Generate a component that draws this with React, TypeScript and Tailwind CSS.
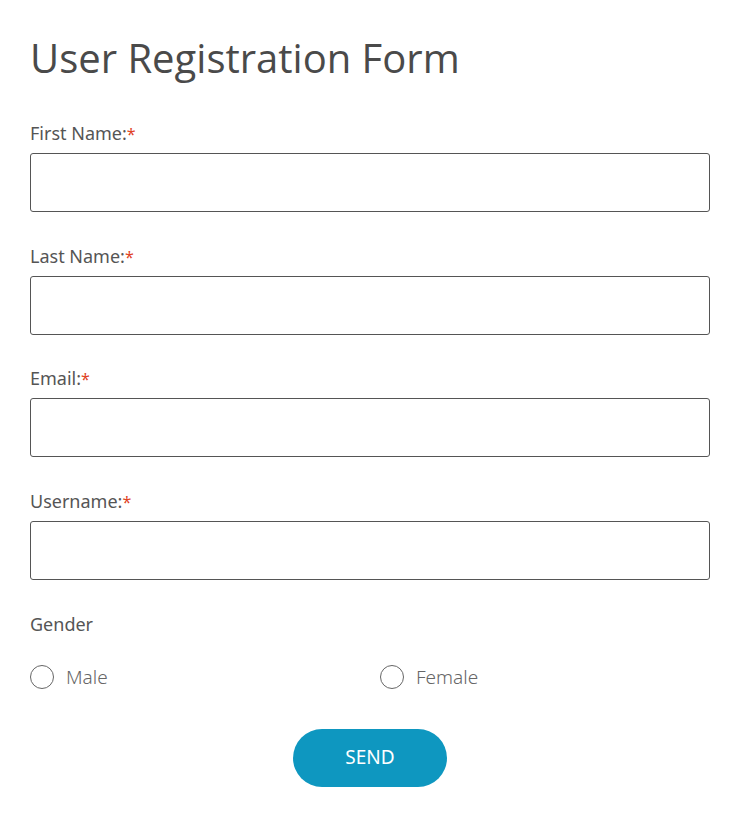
import { useState } from 'react';

const fields = ['First Name:', 'Last Name:', 'Email:', 'Username:'];

export default function App() {
  const [gender, setGender] = useState('');

  return (
    <div className="min-h-screen bg-white px-[30px] pt-[34px]" style={{ fontFamily: '"Noto Sans", Lato, sans-serif' }}>
      <h1
        className="text-[40px] leading-[48px] text-[#4a4a4a] mb-[39px]"
        style={{ fontFamily: '"Open Sans", sans-serif' }}
      >
        User Registration Form
      </h1>

      <form className="flex flex-col" onSubmit={(e) => e.preventDefault()}>
        {fields.map((label) => (
          <div key={label} className="mb-[31.67px]">
            <label className="block h-[24px] text-[18px] leading-[24px] text-[#555] mb-[8px]">
              {label}
              <span className="text-[#e0421f] text-[16px] leading-none">*</span>
            </label>
            <input
              type="text"
              className="block w-full h-[59px] border border-[#555] rounded-[3px] px-3 outline-none"
            />
          </div>
        ))}

        <div className="text-[18px] leading-[24px] text-[#555]">Gender</div>

        <div className="flex mt-[29px]">
          {['Male', 'Female'].map((g) => (
            <label key={g} className="flex items-center shrink-0 w-[350px] h-[24px] cursor-pointer">
              <span
                onClick={() => setGender(g)}
                className="w-[24px] h-[24px] rounded-full border border-[#666] flex items-center justify-center"
              >
                {gender === g && <span className="w-[12px] h-[12px] rounded-full bg-[#0e97c0]" />}
              </span>
              <span className="ml-[12px] text-[19px] leading-[24px] text-[#666] font-light">{g}</span>
            </label>
          ))}
        </div>

        <div className="flex justify-center mt-[40px]">
          <button
            type="submit"
            className="w-[154px] h-[58px] rounded-full bg-[#0e97c0] text-white text-[19px]"
          >
            SEND
          </button>
        </div>
      </form>
    </div>
  );
}
